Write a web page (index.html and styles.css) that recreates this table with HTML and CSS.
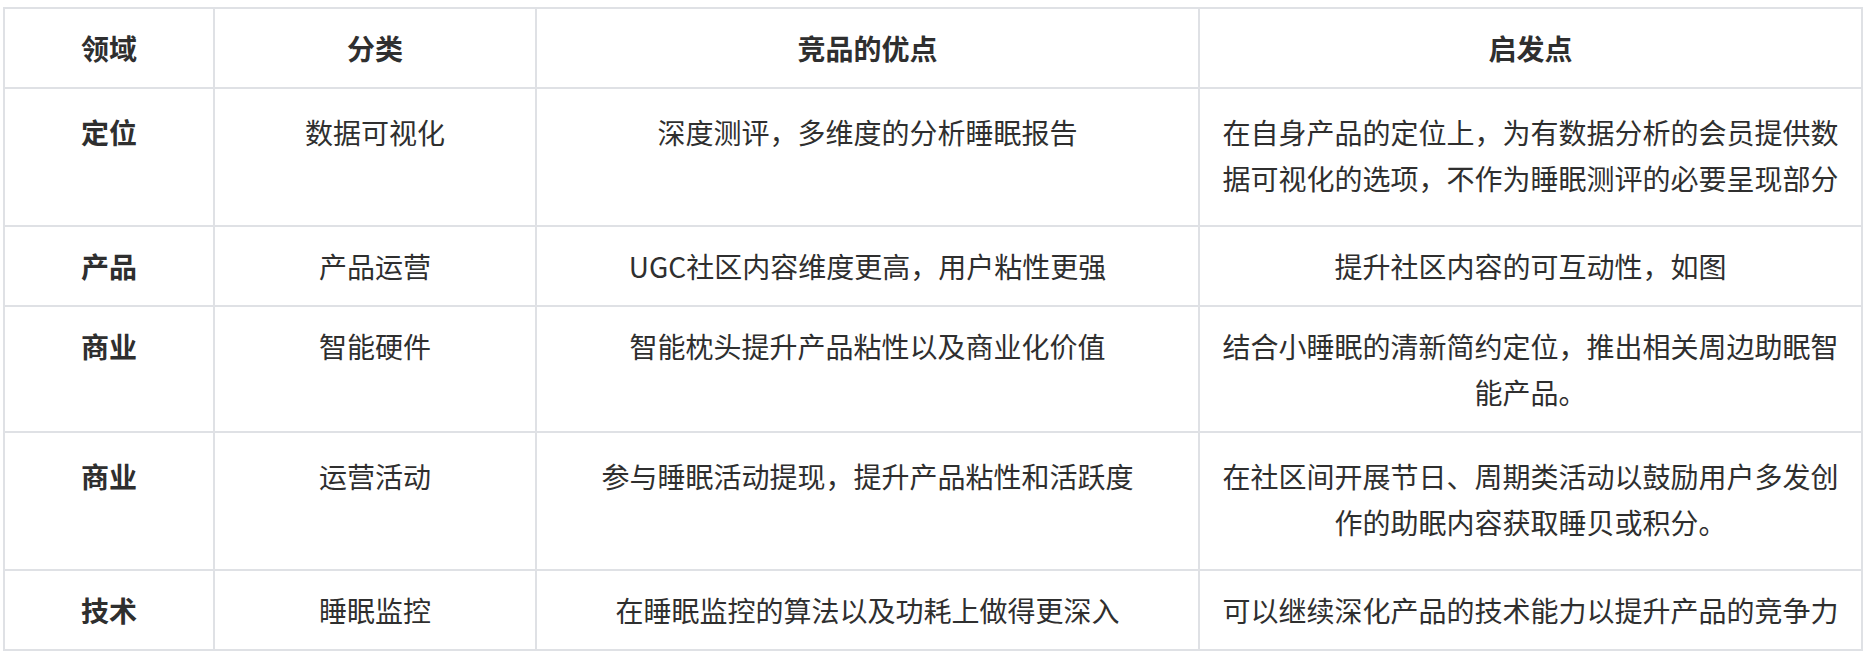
FILE: index.html
```html
<!DOCTYPE html>
<html lang="zh-CN">
<head>
<meta charset="utf-8">
<title>竞品分析</title>
<link rel="stylesheet" href="styles.css">
</head>
<body>
<table class="grid">
  <colgroup>
    <col class="c1">
    <col class="c2">
    <col class="c3">
    <col class="c4">
  </colgroup>
  <thead>
    <tr>
      <th>领域</th>
      <th>分类</th>
      <th>竞品的优点</th>
      <th>启发点</th>
    </tr>
  </thead>
  <tbody>
    <tr class="roomy">
      <td class="area">定位</td>
      <td>数据可视化</td>
      <td>深度测评，多维度的分析睡眠报告</td>
      <td>在自身产品的定位上，为有数据分析的会员提供数据可视化的选项，不作为睡眠测评的必要呈现部分</td>
    </tr>
    <tr>
      <td class="area">产品</td>
      <td>产品运营</td>
      <td>UGC社区内容维度更高，用户粘性更强</td>
      <td>提升社区内容的可互动性，如图</td>
    </tr>
    <tr>
      <td class="area">商业</td>
      <td>智能硬件</td>
      <td>智能枕头提升产品粘性以及商业化价值</td>
      <td>结合小睡眠的清新简约定位，推出相关周边助眠智能产品。</td>
    </tr>
    <tr class="roomy">
      <td class="area">商业</td>
      <td>运营活动</td>
      <td>参与睡眠活动提现，提升产品粘性和活跃度</td>
      <td>在社区间开展节日、周期类活动以鼓励用户多发创作的助眠内容获取睡贝或积分。</td>
    </tr>
    <tr>
      <td class="area">技术</td>
      <td>睡眠监控</td>
      <td>在睡眠监控的算法以及功耗上做得更深入</td>
      <td>可以继续深化产品的技术能力以提升产品的竞争力</td>
    </tr>
  </tbody>
</table>
</body>
</html>
```

FILE: styles.css
```css
html, body {
  margin: 0;
  background: #ffffff;
}

body {
  padding: 7px 3px;
  font-family: "Noto Sans CJK SC", "Noto Sans", sans-serif;
  color: #2f2f2f;
}

.grid {
  width: 1860px;
  table-layout: fixed;
  border-collapse: collapse;
  font-size: 28px;
  line-height: 46px;
}

.c1 { width: 210px; }
.c2 { width: 322px; }
.c3 { width: 663px; }
.c4 { width: 663px; }

.grid th,
.grid td {
  border: 2px solid #dfe1e5;
  padding: 16px 20px;
  text-align: center;
  vertical-align: top;
}

.grid th {
  font-weight: 700;
}

.grid td.area {
  font-weight: 700;
}

.grid tr.roomy td {
  padding-top: 20px;
  padding-bottom: 24px;
}
```
